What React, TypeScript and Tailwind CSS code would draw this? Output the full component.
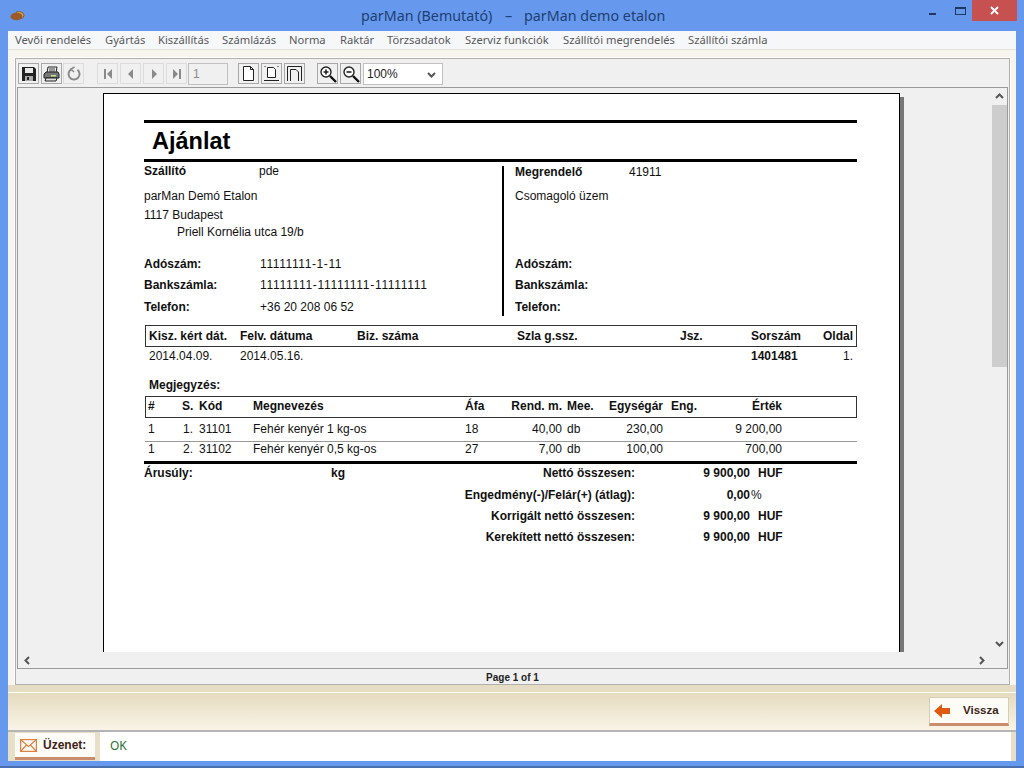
import React from "react";

const Btn = ({ children, disabled, className = "" }: { children: React.ReactNode; disabled?: boolean; className?: string }) => (
  <div className={`w-[21px] h-[21px] flex items-center justify-center border ${disabled ? "border-[#dcdcdc]" : "border-[#a8a8a8]"} bg-[#f0f0f0] ${className}`}>
    {children}
  </div>
);

const menu: [string, string][] = [
  ["Vevői rendelés", "w-[90px]"],
  ["Gyártás", "w-[53px]"],
  ["Kiszállítás", "w-[64px]"],
  ["Számlázás", "w-[67px]"],
  ["Norma", "w-[51px]"],
  ["Raktár", "w-[47px]"],
  ["Törzsadatok", "w-[78px]"],
  ["Szerviz funkciók", "w-[98px]"],
  ["Szállítói megrendelés", "w-[125px]"],
  ["Szállítói számla", "w-[90px]"],
];

const Chevron = ({ d }: { d: string }) => (
  <svg width="9" height="9" viewBox="0 0 9 9" fill="none" stroke="#555" strokeWidth="2">
    <path d={d} />
  </svg>
);

const Totals = ({ label, value, unit }: { label: string; value: string; unit: string }) => (
  <div className="flex items-center h-[21px] pb-[2px]">
    <span className="w-[491px] text-right font-bold whitespace-nowrap">{label}</span>
    <span className="w-[115px] text-right font-bold">{value}</span>
    <span className="ml-[8px] font-bold">{unit}</span>
  </div>
);

export default function App() {
  return (
    <div className="w-[1024px] h-[768px] overflow-hidden flex flex-col bg-[#6699ee] font-['Noto_Sans',sans-serif]">
      {/* title bar */}
      <div className="h-[31px] flex shrink-0 items-start relative">
        <svg className="ml-[10px] mt-[11px]" width="16" height="10" viewBox="0 0 16 10">
          <path d="M6 1 Q10 -0.5 13 2 Q15 4 13 7 L8 7 Z" fill="#e0a040" stroke="#6b4a20" strokeWidth="0.7" />
          <ellipse cx="6.5" cy="5.5" rx="6" ry="3.8" fill="#9c5a28" />
        </svg>
        <div className="absolute left-[361px] top-[5px] flex text-[14.3px] leading-[22px] text-[#1e3f70] whitespace-nowrap">
          <span className="w-[144px]">parMan (Bemutató)</span>
          <span className="w-[19px]">–</span>
          <span>parMan demo etalon</span>
        </div>
        <div className="ml-auto flex items-start pr-[7px]">
          <div className="w-[7px] h-[2px] bg-[#22375c] mt-[13px] mr-[19px]" />
          <div className="w-[11px] h-[8px] border border-[#22375c] border-t-2 mt-[7px] mr-[6px]" />
          <div className="w-[45px] h-[21px] bg-[#c75050] flex items-center justify-center">
            <svg width="9" height="9" viewBox="0 0 9 9" stroke="#fff" strokeWidth="1.8">
              <path d="M1 1 L8 8 M8 1 L1 8" />
            </svg>
          </div>
        </div>
      </div>

      {/* client */}
      <div className="mx-[8px] h-[729px] flex flex-col bg-[#ece5d3]">
        {/* menu */}
        <div className="h-[19px] flex items-center pl-[7px] pt-px bg-[#f6f7f8] text-[11.2px] text-[#58595c] whitespace-nowrap shrink-0 border-b border-[#e4e2dc]">
          {menu.map(([t, w]) => (
            <span key={t} className={w}>{t}</span>
          ))}
        </div>

        {/* panel area */}
        <div className="h-[635px] shrink-0 bg-[#f8f5ee] pl-[7px] pr-[6px] pt-[8px]">
          <div className="h-[627px] border border-[#b0b0b0] bg-[#f0f0f0] outline outline-1 outline-[#fff] flex flex-col px-px">
            {/* toolbar */}
            <div className="h-[28px] shrink-0 flex items-start pt-[4px] pl-px text-[12px]">
              <Btn>
                <svg width="16" height="16" viewBox="0 0 16 16">
                  <path d="M1 1 H13 L15 3 V15 H1 Z" fill="#222" />
                  <rect x="4" y="2" width="8" height="5" fill="#e8e8e8" />
                  <rect x="4" y="10" width="8" height="5" fill="#aaa" />
                  <rect x="6" y="11" width="2" height="3" fill="#222" />
                </svg>
              </Btn>
              <Btn className="ml-[2px]">
                <svg width="17" height="16" viewBox="0 0 17 16">
                  <path d="M5 1 H14 L13 7 H4 Z" fill="#eee" stroke="#222" />
                  <path d="M6 3 H12 M6 5 H12" stroke="#444" />
                  <path d="M1 8 L3 6 H15 L16 8 V12 H1 Z" fill="#777" stroke="#222" />
                  <path d="M3 12 H14 L13 15 H2 Z" fill="#ddd" stroke="#222" />
                  <rect x="8" y="9" width="5" height="1.5" fill="#bde08a" />
                </svg>
              </Btn>
              <Btn disabled className="ml-[1px]">
                <svg width="16" height="16" viewBox="0 0 16 16" fill="none" stroke="#8a8a8a" strokeWidth="2">
                  <path d="M11.5 3.8 A5.5 5.5 0 1 1 5.5 3.2" />
                  <path d="M8.5 1 L5 3.2 L8 6" strokeWidth="1.5" />
                </svg>
              </Btn>
              <Btn disabled className="ml-[13px]">
                <svg width="10" height="10" viewBox="0 0 10 10" fill="#8a8a8a">
                  <rect x="1" y="0" width="2" height="10" />
                  <path d="M9 0 V10 L4 5 Z" />
                </svg>
              </Btn>
              <Btn disabled className="ml-[2px]">
                <svg width="10" height="10" viewBox="0 0 10 10" fill="#8a8a8a"><path d="M7 0 V10 L2 5 Z" /></svg>
              </Btn>
              <Btn disabled className="ml-[2px]">
                <svg width="10" height="10" viewBox="0 0 10 10" fill="#8a8a8a"><path d="M3 0 V10 L8 5 Z" /></svg>
              </Btn>
              <Btn disabled className="ml-[2px]">
                <svg width="10" height="10" viewBox="0 0 10 10" fill="#8a8a8a">
                  <rect x="7" y="0" width="2" height="10" />
                  <path d="M1 0 V10 L6 5 Z" />
                </svg>
              </Btn>
              <div className="ml-[1px] w-[40px] h-[22px] border border-[#c0c0c0] bg-[#f0f0f0] flex items-center pl-[4px] text-[#8a8a8a] font-['Liberation_Sans',sans-serif]">1</div>
              <Btn className="ml-[10px]">
                <svg width="15" height="17" viewBox="0 0 15 17" fill="#fff" stroke="#222">
                  <path d="M2.5 1.5 H9.5 L12.5 4.5 V15.5 H2.5 Z M9.5 1.5 V4.5 H12.5" />
                </svg>
              </Btn>
              <Btn className="ml-[2px]">
                <svg width="17" height="17" viewBox="0 0 17 17" fill="none" stroke="#222">
                  <path d="M4.5 2.5 H10.5 L12.5 4.5 V12.5 H4.5 Z" fill="#fff" />
                  <path d="M1 15.5 H16" />
                  <path d="M1 1.5 H3 M14 1.5 H16" stroke="#888" />
                </svg>
              </Btn>
              <Btn className="ml-[2px]">
                <svg width="17" height="17" viewBox="0 0 17 17" fill="none" stroke="#222">
                  <path d="M1.5 16 V1.5 H15.5 V16" />
                  <path d="M4.5 16 V4.5 H10 L12.5 7 V16" />
                </svg>
              </Btn>
              <Btn className="ml-[12px]">
                <svg width="18" height="18" viewBox="0 0 18 18" fill="none">
                  <circle cx="7" cy="7" r="5" fill="#fff" stroke="#222" strokeWidth="1.4" />
                  <path d="M4.5 7 H9.5 M7 4.5 V9.5" stroke="#222" strokeWidth="1.6" />
                  <path d="M11 11 L17 17" stroke="#111" strokeWidth="2.4" />
                </svg>
              </Btn>
              <Btn className="ml-[2px]">
                <svg width="18" height="18" viewBox="0 0 18 18" fill="none">
                  <circle cx="7" cy="7" r="5" fill="#fff" stroke="#222" strokeWidth="1.4" />
                  <path d="M4.5 7 H9.5" stroke="#222" strokeWidth="1.6" />
                  <path d="M11 11 L17 17" stroke="#111" strokeWidth="2.4" />
                </svg>
              </Btn>
              <div className="ml-[2px] w-[80px] h-[22px] border border-[#c0c0c0] bg-white flex items-center pl-[3px] pr-[6px] justify-between text-[#222] font-['Liberation_Sans',sans-serif]">
                <span>100%</span>
                <Chevron d="M1 3 L4.5 6.5 L8 3" />
              </div>
            </div>

            {/* viewer */}
            <div className="h-[582px] shrink-0 border border-[#9a9a9a] flex flex-col">
              <div className="h-[564px] shrink-0 flex">
                <div className="w-[973px] shrink-0 overflow-hidden pl-[85px] pt-[5px] bg-[#f0f0f0]">
                  <div className="w-[797px] h-[700px] bg-white border border-black shadow-[4px_4px_0_#777] pl-[40px] pr-[42px] pt-[26px] text-[12px] leading-none text-[#111] font-['Liberation_Sans',sans-serif]">
                    <div className="h-[3px] bg-black" />
                    <div className="h-[36px] flex items-center pl-[8px] pt-[2px] text-[23.5px] font-bold text-black">Ajánlat</div>
                    <div className="h-[3px] bg-black" />

                    <div className="flex h-[155px]">
                      <div className="w-[358px] shrink-0">
                        <div className="h-[19px] pb-[2px] flex items-center">
                          <span className="w-[115px] font-bold">Szállító</span>
                          <span>pde</span>
                        </div>
                        <div className="h-[19px] pb-[2px] flex items-center mt-[6px]">parMan Demó Etalon</div>
                        <div className="h-[19px] pb-[2px] flex items-center">1117 Budapest</div>
                        <div className="h-[15px] pb-[2px] flex items-center pl-[33px]">Priell Kornélia utca 19/b</div>
                        <div className="h-[21px] pb-[2px] flex items-center mt-[14px]">
                          <span className="w-[116px] font-bold">Adószám:</span>
                          <span className="tracking-[0.6px]">11111111-1-11</span>
                        </div>
                        <div className="h-[21px] pb-[2px] flex items-center">
                          <span className="w-[116px] font-bold">Bankszámla:</span>
                          <span className="tracking-[0.7px]">11111111-11111111-11111111</span>
                        </div>
                        <div className="h-[22px] flex items-center">
                          <span className="w-[116px] font-bold">Telefon:</span>
                          <span>+36 20 208 06 52</span>
                        </div>
                      </div>
                      <div className="mt-[4px] h-[150px] border-l-2 border-black pl-[11px] flex-1">
                        <div className="h-[11px] flex items-center">
                          <span className="w-[114px] font-bold">Megrendelő</span>
                          <span>41911</span>
                        </div>
                        <div className="h-[19px] pb-[2px] flex items-center mt-[10px]">Csomagoló üzem</div>
                        <div className="h-[21px] pb-[2px] flex items-center mt-[48px]">
                          <span className="font-bold">Adószám:</span>
                        </div>
                        <div className="h-[21px] pb-[2px] flex items-center"><span className="font-bold">Bankszámla:</span></div>
                        <div className="h-[22px] flex items-center"><span className="font-bold">Telefon:</span></div>
                      </div>
                    </div>

                    <div className="mt-[8px] ml-px h-[22px] border border-[#333] flex items-center pl-[3px] pb-px font-bold whitespace-nowrap">
                      <span className="w-[91px]">Kisz. kért dát.</span>
                      <span className="w-[117px]">Felv. dátuma</span>
                      <span className="w-[160px]">Biz. száma</span>
                      <span className="w-[163px]">Szla g.ssz.</span>
                      <span className="w-[71px]">Jsz.</span>
                      <span className="w-[72px]">Sorszám</span>
                      <span>Oldal</span>
                    </div>
                    <div className="ml-[5px] h-[19px] pb-[2px] flex items-center whitespace-nowrap">
                      <span className="w-[91px]">2014.04.09.</span>
                      <span className="w-[511px]">2014.05.16.</span>
                      <span className="w-[90px] font-bold">1401481</span>
                      <span className="w-[12px] text-right">1.</span>
                    </div>
                    <div className="mt-[10px] ml-[5px] h-[18px] flex items-center font-bold">Megjegyzés:</div>

                    <div className="mt-[2px] ml-px h-[22px] border border-[#333] flex items-center pl-[2px] pb-[2px] font-bold whitespace-nowrap">
                      <span className="w-[34px]">#</span>
                      <span className="w-[17px]">S.</span>
                      <span className="w-[54px]">Kód</span>
                      <span className="w-[212px]">Megnevezés</span>
                      <span className="w-[40px]">Áfa</span>
                      <span className="w-[57px] text-right">Rend. m.</span>
                      <span className="w-[5px]" />
                      <span className="w-[30px]">Mee.</span>
                      <span className="w-[66px] text-right">Egységár</span>
                      <span className="w-[8px]" />
                      <span className="w-[40px]">Eng.</span>
                      <span className="w-[71px] text-right">Érték</span>
                    </div>
                    <div className="h-[24px] ml-px pl-[3px] pb-[2px] flex items-center border-b border-[#999] whitespace-nowrap">
                      <span className="w-[35px]">1</span>
                      <span className="w-[16px]">1.</span>
                      <span className="w-[54px]">31101</span>
                      <span className="w-[212px]">Fehér kenyér 1 kg-os</span>
                      <span className="w-[40px]">18</span>
                      <span className="w-[57px] text-right">40,00</span>
                      <span className="w-[5px]" />
                      <span className="w-[30px]">db</span>
                      <span className="w-[66px] text-right">230,00</span>
                      <span className="w-[49px]" />
                      <span className="w-[70px] text-right">9 200,00</span>
                    </div>
                    <div className="h-[16px] ml-px pl-[3px] pb-[2px] flex items-center whitespace-nowrap">
                      <span className="w-[35px]">1</span>
                      <span className="w-[16px]">2.</span>
                      <span className="w-[54px]">31102</span>
                      <span className="w-[212px]">Fehér kenyér 0,5 kg-os</span>
                      <span className="w-[40px]">27</span>
                      <span className="w-[57px] text-right">7,00</span>
                      <span className="w-[5px]" />
                      <span className="w-[30px]">db</span>
                      <span className="w-[66px] text-right">100,00</span>
                      <span className="w-[49px]" />
                      <span className="w-[70px] text-right">700,00</span>
                    </div>
                    <div className="mt-[3px] h-[3px] bg-black" />

                    <div className="h-[19px] pb-[2px] flex items-center whitespace-nowrap font-bold">
                      <span className="w-[187px]">Árusúly:</span>
                      <span className="w-[60px]">kg</span>
                      <span className="w-[244px] text-right">Nettó összesen:</span>
                      <span className="w-[115px] text-right">9 900,00</span>
                      <span className="ml-[8px]">HUF</span>
                    </div>
                    <div className="mt-[2px]">
                      <div className="flex items-center h-[21px] pb-[2px]">
                        <span className="w-[491px] text-right font-bold whitespace-nowrap">Engedmény(-)/Felár(+) (átlag):</span>
                        <span className="w-[115px] text-right font-bold">0,00</span>
                        <span className="ml-px">%</span>
                      </div>
                      <Totals label="Korrigált nettó összesen:" value="9 900,00" unit="HUF" />
                      <Totals label="Kerekített nettó összesen:" value="9 900,00" unit="HUF" />
                    </div>
                  </div>
                </div>
                {/* vertical scrollbar */}
                <div className="w-[15px] shrink-0 ml-px bg-[#f0f0f0] flex flex-col items-center">
                  <div className="h-[17px] flex items-center justify-center"><Chevron d="M1 6 L4.5 2.5 L8 6" /></div>
                  <div className="w-full h-[262px] bg-[#cdcdcd]" />
                  <div className="flex-1" />
                  <div className="h-[17px] flex items-center justify-center"><Chevron d="M1 3 L4.5 6.5 L8 3" /></div>
                </div>
              </div>
              {/* horizontal scrollbar */}
              <div className="flex-1 flex items-center justify-between pl-[5px] pr-[21px] bg-[#f0f0f0]">
                <Chevron d="M6 1 L2.5 4.5 L6 8" />
                <Chevron d="M3 1 L6.5 4.5 L3 8" />
              </div>
            </div>
            <div className="flex-1 flex items-center justify-center pt-px text-[10px] font-bold text-[#222] font-['Liberation_Sans',sans-serif]">Page 1 of 1</div>
          </div>
        </div>

        {/* beige bottom */}
        <div className="h-[7px] shrink-0 bg-[#e6dcc4] border-b border-white box-content" />
        <div className="h-[37px] shrink-0 bg-gradient-to-b from-[#e5dbbf] to-[#f9f4e7] flex justify-end items-start pt-[4px] pr-[7px]">
          <div className="w-[80px] h-[29px] bg-[#fdfbf6] border border-[#d8cdb0] border-b-[3px] border-b-[#c98d6e] flex items-center pl-[4px] pt-px text-[11.5px] font-bold text-[#3a2418]">
            <svg width="17" height="14" viewBox="0 0 17 14" fill="#dd5a10">
              <path d="M0 7 L8 0 V4 H16 V10 H8 V14 Z" />
            </svg>
            <span className="ml-[12px] font-['Liberation_Sans',sans-serif]">Vissza</span>
          </div>
        </div>
        <div className="h-[2px] shrink-0 bg-[#b4b4b4]" />
        <div className="flex-1 flex bg-[#e8dfc8] pl-[7px] pr-[5px]">
          <div className="w-[80px] mt-px mb-px h-[27px] bg-[#fdfbf6] border-b-[3px] border-[#c98d6e] flex items-center pl-[5px] text-[12px] font-bold text-[#3a2418]">
            <svg width="17" height="13" viewBox="0 0 17 13" fill="none" stroke="#e0803e" strokeWidth="1.2">
              <rect x="0.6" y="0.6" width="15.8" height="11.8" />
              <path d="M1 1 L8.5 7.5 L16 1 M1 12 L6.5 6 M16 12 L10.5 6" />
            </svg>
            <span className="ml-[6px] font-['Liberation_Sans',sans-serif]">Üzenet:</span>
          </div>
          <div className="ml-[5px] flex-1 bg-white flex items-center pl-[10px] pb-[2px] text-[12px] text-[#2a6f30]">OK</div>
        </div>
      </div>

      <div className="flex-1 flex items-end">
        <div className="w-full h-[2px] bg-[#4a6fae]" />
      </div>
    </div>
  );
}
